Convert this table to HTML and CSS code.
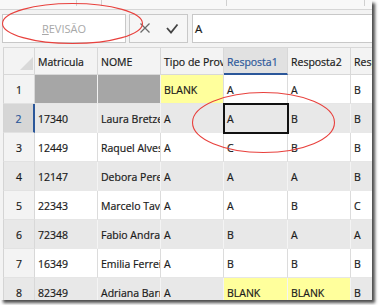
FILE: index.html
```html
<!DOCTYPE html>
<html lang="pt">
<head>
<meta charset="utf-8">
<link rel="stylesheet" href="styles.css">
</head>
<body>
<div class="shot">
  <div class="screen">
    <div class="ribbon">
      <span class="sep sep1"></span>
      <span class="sep sep2"></span>
      <span class="sep sep3"></span>
      <span class="sep sep4"></span>
    </div>
    <div class="fbar">
      <div class="namebox"><u>R</u>EVISÃO</div>
      <div class="btns">
        <svg width="57" height="27" viewBox="0 0 57 27">
          <path d="M10.5 8.5 L19.5 17.5 M19.5 8.5 L10.5 17.5" stroke="#6a6a6a" stroke-width="1.3" fill="none"/>
          <path d="M37 13 L41 17.5 L47.5 9.5" stroke="#444" stroke-width="1.8" fill="none"/>
        </svg>
      </div>
      <div class="finput">A</div>
    </div>
    <div class="sheet">
      <div class="row head">
        <div class="rh corner"><svg width="31" height="26" viewBox="0 0 31 26"><polygon points="29,9 29,22 16,22" fill="#d9d9d9"/></svg></div>
        <div class="c">Matricula</div>
        <div class="c">NOME</div>
        <div class="c">Tipo de Prova</div>
        <div class="c w64 hsel">Resposta1</div>
        <div class="c">Resposta2</div>
        <div class="c">Resposta3</div>
      </div>
      <div class="row odd">
        <div class="rh">1</div>
        <div class="c dark"></div>
        <div class="c dark"></div>
        <div class="c yellow">BLANK</div>
        <div class="c w64">A</div>
        <div class="c">A</div>
        <div class="c">B</div>
      </div>
      <div class="row even">
        <div class="rh rsel">2</div>
        <div class="c">17340</div>
        <div class="c">Laura Bretzel</div>
        <div class="c">A</div>
        <div class="c w64 sel">A</div>
        <div class="c">B</div>
        <div class="c">B</div>
      </div>
      <div class="row odd">
        <div class="rh">3</div>
        <div class="c">12449</div>
        <div class="c">Raquel Alves</div>
        <div class="c">A</div>
        <div class="c w64">C</div>
        <div class="c">B</div>
        <div class="c">B</div>
      </div>
      <div class="row even">
        <div class="rh">4</div>
        <div class="c">12147</div>
        <div class="c">Debora Pereira</div>
        <div class="c">A</div>
        <div class="c w64">A</div>
        <div class="c">A</div>
        <div class="c">B</div>
      </div>
      <div class="row odd">
        <div class="rh">5</div>
        <div class="c">22343</div>
        <div class="c">Marcelo Tavares</div>
        <div class="c">A</div>
        <div class="c w64">A</div>
        <div class="c">B</div>
        <div class="c">C</div>
      </div>
      <div class="row even">
        <div class="rh">6</div>
        <div class="c">72348</div>
        <div class="c">Fabio Andrade</div>
        <div class="c">A</div>
        <div class="c w64">B</div>
        <div class="c">A</div>
        <div class="c">A</div>
      </div>
      <div class="row odd">
        <div class="rh">7</div>
        <div class="c">16349</div>
        <div class="c">Emilia Ferreira</div>
        <div class="c">A</div>
        <div class="c w64">B</div>
        <div class="c">B</div>
        <div class="c">B</div>
      </div>
      <div class="row even">
        <div class="rh">8</div>
        <div class="c">82349</div>
        <div class="c">Adriana Barros</div>
        <div class="c">A</div>
        <div class="c w64 yellow">BLANK</div>
        <div class="c yellow">BLANK</div>
        <div class="c">B</div>
      </div>
    </div>
  </div>
  <svg class="annot" width="381" height="305" viewBox="0 0 381 305">
    <ellipse cx="72.5" cy="23.5" rx="70" ry="20" fill="none" stroke="#e8413d" stroke-width="1.1"/>
    <ellipse cx="263.5" cy="122.5" rx="71" ry="30" fill="none" stroke="#e8413d" stroke-width="1.1"/>
  </svg>
</div>
</body>
</html>
```

FILE: styles.css
```css
html, body {
  margin: 0;
  padding: 0;
  background: #fff;
}
body {
  font-family: "Open Sans", "Noto Sans", sans-serif;
  color: #222;
}
.shot {
  position: relative;
  width: 381px;
  height: 305px;
  overflow: hidden;
  background: #fff;
}
.screen {
  width: 372px;
  height: 300px;
  overflow: hidden;
  background: #f3f3f3;
  box-shadow: 3px 3px 3px rgba(0, 0, 0, 0.7);
  display: flex;
  flex-direction: column;
}
.ribbon {
  flex: none;
  height: 9px;
  border-bottom: 1px solid #d6d6d6;
  background: #f8f8f8;
  display: flex;
  align-items: flex-start;
}
.sep {
  flex: none;
  width: 1px;
  height: 6px;
  background: #d0d0d0;
}
.sep1 { margin-left: 76px; }
.sep2 { margin-left: 24px; }
.sep3 { margin-left: 124px; }
.sep4 { margin-left: 137px; }
.fbar {
  flex: none;
  display: flex;
  height: 29px;
  margin-top: 4px;
  padding-left: 2px;
}
.namebox {
  flex: none;
  width: 124px;
  box-sizing: border-box;
  border: 1px solid #c8c8c8;
  background: #fff;
  color: #a8a8a8;
  font-size: 11px;
  line-height: 27px;
  text-align: center;
}
.namebox u {
  text-decoration-color: #a8a8a8;
}
.btns {
  flex: none;
  margin-left: 3px;
  width: 59px;
  box-sizing: border-box;
  border: 1px solid #c8c8c8;
  background: #f6f6f6;
}
.btns svg {
  display: block;
}
.finput {
  flex: none;
  margin-left: 4px;
  width: 200px;
  box-sizing: border-box;
  border: 1px solid #c8c8c8;
  background: #fff;
  padding-left: 2px;
  font-size: 11.5px;
  line-height: 27px;
  color: #1a1a1a;
  -webkit-text-stroke: 0.2px #1a1a1a;
}
.sheet {
  flex: none;
  margin-top: 4px;
  margin-left: 3px;
  display: flex;
  flex-direction: column;
}
.row {
  flex: none;
  display: flex;
  height: 29px;
}
.row.head {
  height: 27px;
  border-top: 1px solid #d8d8d8;
}
.c, .rh {
  flex: none;
  box-sizing: border-box;
  height: 100%;
  font-size: 10.5px;
  line-height: 25px;
  padding-top: 3px;
  white-space: nowrap;
  overflow: hidden;
  color: #1a1a1a;
  -webkit-text-stroke: 0.2px currentColor;
}
.c {
  width: 63px;
  padding-left: 3px;
  border-right: 1px solid #dcdcdc;
  border-bottom: 1px solid #e6e6e6;
}
.w64 {
  width: 64px;
}
.rh {
  width: 32px;
  text-align: center;
  border-left: 1px solid #d4d4d4;
  border-right: 1px solid #d8d8d8;
  border-bottom: 1px solid #e2e2e2;
}
.head .c, .head .rh {
  background: #f3f3f3;
  line-height: 24px;
  padding-top: 2px;
  border-right-color: #d8d8d8;
  border-bottom: 1px solid #d8d8d8;
}
.head .corner {
  padding-top: 0;
}
.corner svg {
  display: block;
}
.head .hsel {
  background: #e1e1e1;
  color: #2b579a;
  border-bottom: 2px solid #2b579a;
}
.odd .c {
  background: #fff;
}
.odd .rh {
  background: #f3f3f3;
}
.even .c {
  background: #e8e8e8;
  border-right-color: #f4f4f4;
  border-bottom-color: #e8e8e8;
}
.even .rh {
  background: #e8e8e8;
}
.even .rh.rsel {
  background: #d6d6d6;
  color: #2b579a;
  border-right: 2px solid #2b579a;
}
.odd .c.dark {
  background: #a6a6a6;
  border-right-color: #f2f2f2;
}
.row .c.yellow {
  background: #ffff9c;
}
.c.sel {
  position: relative;
  z-index: 1;
  outline: 2px solid #111;
  outline-offset: -1px;
}
.annot {
  position: absolute;
  left: 0;
  top: 0;
  pointer-events: none;
}
```
